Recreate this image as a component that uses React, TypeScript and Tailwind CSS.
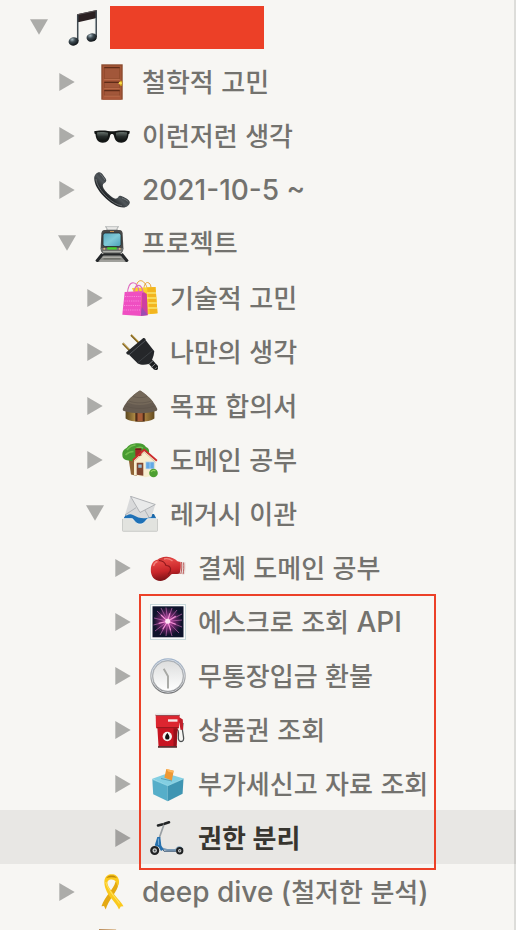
import { useId } from 'react'
import type { ReactNode } from 'react'
import clsx from 'clsx'

interface IIconProps {
  children: ReactNode
}

interface IPage {
  name?: string
  level: number
  icon: () => React.JSX.Element
  open?: boolean
  selected?: boolean
  redacted?: boolean
}

const indents = ['pl-[30px]', 'pl-[58px]', 'pl-[86px]', 'pl-[114px]']

function Icon({ children }: IIconProps): React.JSX.Element {
  return (
    <svg viewBox="0 0 36 36" className="size-9 shrink-0" aria-hidden="true">
      {children}
    </svg>
  )
}

function Music() {
  const id = useId()
  return (
    <Icon>
      <defs>
        <radialGradient id={id} cx=".4" cy=".25" r=".75">
          <stop offset="0" stopColor="#a9bac2" />
          <stop offset=".4" stopColor="#3e4b52" />
          <stop offset="1" stopColor="#0c0f12" />
        </radialGradient>
      </defs>
      <path d="M11 4.2 30.8 0v8L11 12.6z" fill="#2b2122" />
      <path d="M11 4.2 30.8 0v1L11 5.3z" fill="#5a5557" />
      <path d="M11.700 5v26M30.200 1v26" stroke="#3d474e" strokeWidth="1.500" />
      <path d="M12.400 12v17M29.400 8v17" stroke="#9aa6ad" strokeWidth=".4" />
      <ellipse cx="7.600" cy="31.400" rx="5" ry="4.200" transform="rotate(-12 7.600 31.400)" fill={`url(#${id})`} />
      <ellipse cx="25.700" cy="27.500" rx="5.200" ry="4.200" transform="rotate(-12 25.700 27.500)" fill={`url(#${id})`} />
    </Icon>
  )
}

function Door() {
  return (
    <Icon>
      <path d="M7.300.300h21.400v35.400H7.300z" fill="#8a4a2c" />
      <path d="M8.600 1.600h18.800v34.100H8.600z" fill="#a9583a" />
      <path d="M10.300 3.200h15.400v11.600H10.300zM10.300 18h15.400v5.800H10.300zM10.300 26.200h15.400v5.200H10.300z" fill="#a2573a" stroke="#864528" strokeWidth=".7" />
      <path d="M10.300 3.600h15.400M10.300 18.400h15.400M10.300 26.600h15.400" stroke="#5f2c18" strokeWidth="1.300" />
      <path d="M10.300 15.400h15.400M10.300 24.300h15.400M10.300 32h15.400" stroke="#c67d59" strokeWidth=".7" />
      <path d="M26 16.800h2.200v5H26z" fill="#c99a1a" />
      <ellipse cx="26.300" cy="19.200" rx="1.600" ry="1.400" fill="#f8d949" />
    </Icon>
  )
}

function Sunglasses() {
  const id = useId()
  return (
    <Icon>
      <defs>
        <linearGradient id={id} x2="0" y2="1">
          <stop offset="0" stopColor="#66716c" />
          <stop offset=".5" stopColor="#262c2a" />
          <stop offset="1" stopColor="#0e1110" />
        </linearGradient>
      </defs>
      <path d="M.2 13.200c3-.9 10-.9 13.800-.3 2.700.6 5.300.6 8 0 3.800-.6 10.800-.6 13.800.3l-.3 2.300-1 .8c-.4 4.800-2.200 8.400-7.300 8.400-4.700 0-6.500-3.200-7.200-6.700-.3-1.500-1-2-2-2s-1.700.5-2 2c-.7 3.500-2.500 6.700-7.200 6.700-5.100 0-6.900-3.600-7.300-8.400l-1-.8z" fill="#141716" />
      <path d="M3 14.600c2.700-.8 8.200-.7 11 .2.500 3.500-1.500 8.300-5.400 8.300-4.300 0-5.600-4-5.600-8.500zM33 14.600c-2.700-.8-8.200-.7-11 .2-.5 3.500 1.500 8.300 5.400 8.300 4.300 0 5.600-4 5.600-8.500z" fill={`url(#${id})`} />
    </Icon>
  )
}

function Receiver() {
  const id = useId()
  return (
    <Icon>
      <defs>
        <linearGradient id={id} x1=".35" y1=".65" x2=".62" y2=".38">
          <stop offset="0" stopColor="#23272a" />
          <stop offset=".5" stopColor="#50565a" />
          <stop offset="1" stopColor="#303538" />
        </linearGradient>
      </defs>
      <path d="M5.500.2c2 0 3.300 2.600 5 4.800 1.500 2 2.300 3.200 1.500 4.600-.8 1.500-3 1.800-3.200 3.600-.2 2.600 2.600 6 5.600 8.800 2.900 2.800 5.400 5 8 4.600 1.700-.3 1.700-2.300 3.300-2.800 1.500-.4 3.200.8 5.300 2 2.600 1.500 5 2.700 4.800 4.800-.3 2.700-3.300 5-6.300 5-6.200 0-13.700-5-19.600-11.100C4 18.600.2 11.700.2 6.200.2 2.900 2.600.2 5.500.2z" fill={`url(#${id})`} />
      <path d="M5.700 1.500c2 1 3.300 4 5.300 6.500M28 26c2 1 5 2 6.500 4" fill="none" stroke="#73797c" strokeWidth="1" />
      <path d="M2 7c.6 6 5.500 12.800 11.500 18.500C18 29.700 23 33 28 33.800" fill="none" stroke="#75797b" strokeWidth=".8" />
    </Icon>
  )
}

function Train() {
  const id = useId()
  return (
    <Icon>
      <defs>
        <linearGradient id={id} x2="1" y2="1">
          <stop offset="0" stopColor="#58a9c0" />
          <stop offset=".5" stopColor="#80cad7" />
          <stop offset="1" stopColor="#4b9fb8" />
        </linearGradient>
      </defs>
      <path d="M8 27.500 1.600 36h32.800L28 27.500z" fill="#8b8c88" />
      <path d="M8.500 28 2.500 35.500M27.500 28l6 7.500" stroke="#25282a" strokeWidth="3" />
      <path d="M8.500 31.300h19M5.500 35h25" stroke="#b4b3ae" strokeWidth="1" />
      <path d="M9.500 32.800h17" stroke="#64665f" strokeWidth="1" />
      <path d="M11 .8h14M12 .8l2 4M24 .8l-2 4M12 3.300h12" fill="none" stroke="#a1a4a4" strokeWidth=".8" />
      <path d="M10.500 4h15c2 0 2.900 1.400 3.100 3.200l.8 15.400c0 3-1.700 5-4.300 5H10.900c-2.600 0-4.300-2-4.300-5l.8-15.400C7.600 5.400 8.500 4 10.500 4z" fill="#494a49" />
      <path d="M6.800 22h22.400c0 3.300-1.500 5-4.100 5H10.900c-2.600 0-4.100-1.700-4.100-5z" fill="#6f706d" />
      <path d="M9 25.700h18" stroke="#b6b7b2" strokeWidth="1.200" />
      <rect x="9" y="7" width="18" height="13.500" rx="2.200" fill={`url(#${id})`} stroke="#262829" strokeWidth=".8" />
      <path d="M16 5.500h4" stroke="#d29a55" strokeWidth=".9" />
      <rect x="13.300" y="21.300" width="9.400" height="2.200" fill="#46d52c" />
      <circle cx="10.300" cy="22.800" r="1" fill="#dcb27c" />
      <circle cx="25.700" cy="22.800" r="1" fill="#dcb27c" />
      <path d="M9.500 27.300h17l1 2.200h-19z" fill="#252728" />
    </Icon>
  )
}

function Bags() {
  return (
    <Icon>
      <path d="M14 9c0-5 2-8.300 4.700-8.300S24 4 25 8M22 9c0-4 1.500-6.500 3.500-6.500S29 5 29 8" fill="none" stroke="#e7a33b" strokeWidth="1" />
      <path d="m10 8 23.500-1 2 26.300L20 35z" fill="#fbd02d" />
      <path d="M25 7.600 33.500 7l2 26.300-7.500.7z" fill="#f3b51f" />
      <path d="M25 13h9M25 18h9.500M26 23h9M26 28h9" stroke="#f9e56f" strokeWidth="1.500" />
      <path d="m2.700 12 17.500-1L18.800 36 .3 34.800z" fill="#ef4fc2" />
      <path d="m20.200 11 4.600 3 1 21.300-7 .7z" fill="#cf3fa2" />
      <path d="m19.800 27 5.700 8-6.700.8z" fill="#9c4db2" />
      <path d="M3 16.500h16M2.500 21h16M2 25.500h16.300M1.500 30H18" stroke="#f988da" strokeWidth="1" strokeDasharray="1.200 1" />
      <path d="M5.500 14C5.500 7 8 2.700 11 2.700S16.500 6 17 13M12 11c1-4 3-6 5-5.600 2 .4 3.500 3 4 7.600" fill="none" stroke="#df68be" strokeWidth="1.100" />
    </Icon>
  )
}

function Plug() {
  return (
    <Icon>
      <path d="m.7 9.300 9.500 9.700M9 1l10 10" stroke="#7f601d" strokeWidth="2" />
      <path d="m1 9 9 9.300M9.400.7 19 10" stroke="#d6b760" strokeWidth=".8" />
      <path d="m26 25 9.500 10.500" stroke="#1d1f21" strokeWidth="5.400" />
      <path d="m4.300 18.300 17-14.300c1.500-.3 2.600.8 2.400 2.300l8.600 11c-.5 5.500-2.500 10-5.700 12.800-4 1-8 .9-10.800-.6L7 20.800c-1.700.2-3-.9-2.700-2.500z" fill="#25272a" />
      <path d="M7 20.800 23.700 6.300" stroke="#51555a" strokeWidth="1" />
      <path d="m16 28.500 14.500-12" stroke="#3c4044" strokeWidth="1" />
      <path d="m26.800 30.500 4.400-4M29.500 33.300l4.300-4M32.500 35.700l2.500-2.500" stroke="#85898c" strokeWidth="1" />
    </Icon>
  )
}

function Hut() {
  const id = useId()
  return (
    <Icon>
      <defs>
        <linearGradient id={id}>
          <stop offset="0" stopColor="#5b471f" />
          <stop offset=".35" stopColor="#b58f48" />
          <stop offset=".7" stopColor="#a17c3d" />
          <stop offset="1" stopColor="#634b20" />
        </linearGradient>
      </defs>
      <path d="M3.600 21h28.800v9.500c-3 2.300-8.400 3.300-14.400 3.300s-11.400-1-14.400-3.300z" fill={`url(#${id})`} />
      <path d="M13.300 23h9.400v10.500h-9.400z" fill="#4e2c19" />
      <path d="M15.500 24h5.200v9h-5.200z" fill="#a85d38" />
      <path d="M18 2.500c4 2.300 13.500 9.500 17.200 18.300.3 1-.2 2-1.200 2.300-5 1.600-10.500 2.100-16 2.100S7 24.700 2 23.100c-1-.3-1.500-1.300-1.200-2.300C4.500 12 14 4.800 18 2.500z" fill="#665b50" />
      <path d="M18 2.500c3 1.700 9 6 13.200 11.500-7 4-20 4-26.400 0C9 8.500 15 4.200 18 2.500z" fill="#746859" />
      <path d="M11 8.500c4 1.500 10 1.500 14 0M7 13c6 2.500 16 2.500 22 0M3.500 18c8 3.300 21 3.300 29 0" fill="none" stroke="#5c5248" strokeWidth=".6" />
    </Icon>
  )
}

function House() {
  return (
    <Icon>
      <path d="M6.500 16H14l1 18-6-1.500z" fill="#8f6335" />
      <path d="M14 1.300c5-.7 8.500 1 10 3.700 2.700 1 3.500 3 3 6-1 3.500-6 4-10.500 4.500C13 19 9.500 19.500 7 18.500 3 18.800.2 16.500.4 13.300-.2 9.500 2 7 4.500 6 6.500 3 10 1.500 14 1.300z" fill="#479b31" />
      <path d="M5 8c2-2.500 5-4.700 8.500-5M3.500 13c2-2 5-3.500 8-3.500M13 7c2.500-1.700 5.500-2 8-1" fill="none" stroke="#72bd4f" strokeWidth="1.500" />
      <path d="M12 17 22 8.500l11.500 10V33l-10 2.300L12 33z" fill="#f8edcf" />
      <path d="M13.300 6.500h6v7.500h-6z" fill="#a32a27" />
      <path d="M13.300 6.500h6V8h-6z" fill="#741d1b" />
      <path d="m10.800 18.300 11.400-10.500 12.700 11" fill="none" stroke="#cc2c2d" strokeWidth="1.800" />
      <path d="m12.300 19.300 10-9 11.200 10" fill="none" stroke="#c6a981" strokeWidth=".6" />
      <path d="M14.700 20.800h6.600v12.900l-6.600-1z" fill="#81452e" />
      <path d="M16.300 22.500h3.400v3.300h-3.400z" fill="#91bcd8" />
      <path d="M23.700 19.800h8.600v7.200h-8.600z" fill="#62a8e5" stroke="#d9e3e6" strokeWidth=".8" />
      <path d="M28 20v7" stroke="#b8dcf5" strokeWidth=".6" />
      <circle cx="31.500" cy="31" r="4.300" fill="#4d9f31" />
      <path d="M29 30c1.300-1.500 3-2 4.500-1" fill="none" stroke="#91d35f" strokeWidth="1.100" />
    </Icon>
  )
}

function Inbox() {
  return (
    <Icon>
      <path d="M4 18h28l2.500 5v7h-33v-7z" fill="#1b68a8" />
      <path d="M8.500.3 33.300 8.500 28.500 24l-11 1.500L3 19z" fill="#d9dadb" />
      <path d="M8.500.3 33.300 8.500 18 16.500z" fill="#e9eaea" stroke="#a3a6a9" strokeWidth=".8" />
      <path d="m3 19 11-7.300M28.500 24l-5.700-10" stroke="#a3a8ad" strokeWidth=".8" />
      <path d="M2 22c3-3.500 6-4.500 9-3 4.500 2.500 9 4 14 3l8-1.500 1 4.500-16 5.500L2 25z" fill="#1e71b7" />
      <path d="M.3 22.500h9.500c2 0 3.200 5.500 8.200 5.500s6.200-5.500 8.200-5.500h9.500V34c0 .8-.5 1.300-1.300 1.300H1.600c-.8 0-1.300-.5-1.300-1.300z" fill="#e2e3df" />
      <path d="M.5 22.600h9.300c2 0 3.200 5.500 8.200 5.500s6.200-5.500 8.200-5.500h9.300" fill="none" stroke="#f7f7f5" strokeWidth=".7" />
      <path d="M.4 23v11.600c0 .4.300.7.900.7h33.400c.6 0 .9-.3.900-.7V23" fill="none" stroke="#c0c2bf" strokeWidth=".8" />
    </Icon>
  )
}

function Glove() {
  const id = useId()
  return (
    <Icon>
      <defs>
        <linearGradient id={id} x2=".2" y2="1">
          <stop offset="0" stopColor="#b92526" />
          <stop offset=".25" stopColor="#e54643" />
          <stop offset=".65" stopColor="#c9262a" />
          <stop offset="1" stopColor="#801217" />
        </linearGradient>
      </defs>
      <path d="M30 11.500c1.700.8 3.700.8 5.500.5.300 4 .2 8.300-.5 12.300-2 .1-4-.3-6-1z" fill="#e8dedb" />
      <path d="M31.500 12c.5 4 .3 8-.7 12M33.600 12.500c.4 4 .2 8-.5 11.700" fill="none" stroke="#b23b3a" strokeWidth=".8" />
      <path d="M16 6.800c5-.3 9 2 11.500 4.500l3 .8c.6 3.700.3 8-1 11.700-3.500.5-6.500-.5-8.500.7-2.500 3-6 6.400-10.500 6.400C4 30.900.7 26 .8 19.800.9 14 3.500 10.300 7.500 9.800 9.500 8 12.500 7 16 6.800z" fill={`url(#${id})`} />
      <path d="M9 10.500c3.700.3 6 2 7 5 2 0 4 1 4.500 3 .4 2-.5 4-2.500 6" fill="none" stroke="#8d171b" strokeWidth="1.100" />
      <path d="M3.500 16c.7-2.500 2-4 4-4.500M14 9c3-.7 6 0 8.500 2" fill="none" stroke="#f2837c" strokeWidth="1.300" />
    </Icon>
  )
}

function Fireworks() {
  const id = useId()
  return (
    <Icon>
      <defs>
        <radialGradient id={id}>
          <stop offset="0" stopColor="#d34aae" />
          <stop offset=".45" stopColor="#75286f" />
          <stop offset="1" stopColor="#11132c" />
        </radialGradient>
      </defs>
      <path d="M.4.400h35.200v35.200H.4z" fill="#fbfdfd" stroke="#b5cccf" strokeWidth=".8" />
      <path d="M2.500 2.300h31v31h-31z" fill="#0e142c" />
      <circle cx="17.700" cy="17.300" r="14" fill={`url(#${id})`} />
      <path d="M17.700 17.300 16 3.500M17.700 17.300 22 4M17.700 17.300 27 6M17.700 17.300 32 10M17.700 17.300 32 16M17.700 17.300 32 23M17.700 17.300 29 29M17.700 17.300 22 32M17.700 17.300 16 32M17.700 17.300 10 31M17.700 17.300 5 27M17.700 17.300 3.500 21M17.700 17.300 4 14M17.700 17.300 7 7M17.700 17.300 11 4" stroke="#c268b4" strokeWidth=".7" />
      <path d="m17.700 17.300 2-8M17.700 17.300l8-5M17.700 17.300l8 3M17.700 17.300l3 9M17.700 17.300l-5 8M17.700 17.300l-9 2M17.700 17.300 11 11" stroke="#f794d8" strokeWidth="1.100" />
      <circle cx="17.700" cy="17.300" r="2.500" fill="#ffe3f4" />
    </Icon>
  )
}

function Clock() {
  const id = useId()
  return (
    <Icon>
      <defs>
        <linearGradient id={id} x2="0" y2="1">
          <stop offset="0" stopColor="#9fb3cb" />
          <stop offset=".5" stopColor="#b0b2b5" />
          <stop offset="1" stopColor="#6e6f70" />
        </linearGradient>
        <linearGradient id={`${id}f`} x2="0" y2="1">
          <stop offset="0" stopColor="#dcdddd" />
          <stop offset="1" stopColor="#fff" />
        </linearGradient>
      </defs>
      <circle cx="18" cy="18" r="17.800" fill={`url(#${id})`} />
      <circle cx="18" cy="18" r="16.400" fill="none" stroke="#dfe3e8" strokeWidth=".8" />
      <circle cx="18" cy="18" r="15.200" fill={`url(#${id}f)`} stroke="#96999c" strokeWidth=".6" />
      <path d="m13.700 10.700 4.300 7.500v12.300" fill="none" stroke="#a7a8a5" strokeWidth="1.900" strokeLinejoin="round" />
    </Icon>
  )
}

function Fuel() {
  return (
    <Icon>
      <path d="M27 17.500c2 .5 1.500 4 1.300 7-.3 3.300.9 5 2.700 5 2.300 0 3-2 2.500-4.500L32.300 17l.7-6" fill="none" stroke="#4d5051" strokeWidth="1.300" />
      <path d="m25.700 7 3.600-1.800 3.500 2.300.4 10-2.600.5-1.300-7z" fill="#c11e29" />
      <path d="M7.300 15h20.200l-1 19.500H8.500z" fill="#c81522" />
      <path d="M23.500 15h4l-1 19.500h-3z" fill="#98111b" />
      <path d="M8 34h19v1.800H8z" fill="#5d3334" />
      <path d="M5.700 2.300h24l-.8 13.900H6z" fill="#dc2630" />
      <path d="M5.700 1.500h24v2.200h-24z" fill="#e5e5e5" />
      <path d="M5.700 3.500h24" stroke="#7b2027" strokeWidth=".7" />
      <path d="M7 15.700h21.500" stroke="#8a151b" strokeWidth="1" />
      <path d="M18 7.300h9.500v2.400H18z" fill="#f5e9ea" />
      <circle cx="17.300" cy="24.500" r="4.700" fill="#f6f1ef" />
      <path d="M17.300 20.800c1 1.700 2.200 3 2.200 4.600a2.200 2.200 0 0 1-4.400 0c0-1.600 1.200-2.900 2.200-4.600z" fill="#101011" />
    </Icon>
  )
}

function Ballot() {
  return (
    <Icon>
      <path d="M2.300 13 17.800 19v16.300L3.200 28.300z" fill="#56aec9" />
      <path d="M17.800 19 33.500 12.500l-.9 15.300-14.800 7.500z" fill="#3f95b2" />
      <path d="M2.300 12.700 17 7.500l16.500 5-15.700 6.900z" fill="#83cfe2" />
      <path d="m2.300 13.300 15.500 6.400 15.600-6.900" fill="none" stroke="#97dbe9" strokeWidth=".8" />
      <path d="m11 12.500 11 2.500" stroke="#5b9fb3" strokeWidth="1" />
      <path d="m16.300 3 7.400 1.800-1.800 9.800-7.500-2.800z" fill="#ee9834" />
      <path d="m16.300 3 7.400 1.800-.4 1.900-5-.9z" fill="#ffb75c" />
    </Icon>
  )
}

function Scooter() {
  return (
    <Icon>
      <path d="M8.500 20 14 4.500" stroke="#999fa3" strokeWidth="1.700" />
      <path d="m8 5.400 4-1M14.500 3.700l4.500-1.400" stroke="#222425" strokeWidth="2.600" strokeLinecap="round" />
      <path d="M11 28.300 17 30h14" fill="none" stroke="#7c9cb8" strokeWidth="2.200" />
      <path d="M11.500 27.500 14 31.300h12" fill="none" stroke="#45627d" strokeWidth="1" />
      <path d="M7.300 17h3l1 8.500 2.300 4-2.600 1.500-2.300-4-4-1.500z" fill="#2671ae" />
      <path d="m8.400 18.500.3 6.500" stroke="#81b7df" strokeWidth=".9" />
      <path d="M26 28.500c1.500-2.200 5.500-2.200 7 .5" fill="none" stroke="#5287b1" strokeWidth="1" />
      <circle cx="4.700" cy="30.500" r="3.400" fill="#cfd2d2" stroke="#202223" strokeWidth="2.300" />
      <circle cx="29.700" cy="30.700" r="2.700" fill="#cfd2d2" stroke="#202223" strokeWidth="2" />
      <circle cx="4.700" cy="30.500" r="1" fill="#4a4d4f" />
      <circle cx="29.700" cy="30.700" r=".8" fill="#4a4d4f" />
    </Icon>
  )
}

function Ribbon() {
  return (
    <Icon>
      <path d="M24.800 7c0 6-3.300 11-6.800 16-2.500 3.700-5 8-6.300 12.500l-1.700-3.500-2.500.3c1.500-5 4.500-9 7-12.500 3.500-4.500 6-8 7-12z" fill="#e4a912" />
      <path d="M10.500 6C11.500 2 14 .2 17.700.2S24 2 24.900 6c.3 2-.2 4-1.400 6.300-.8-3.600-2.300-6.800-5.800-6.800s-4.500 2-4.200 4c.7 4 4.500 8 8 12.500 3 3.700 6.300 6.700 8 10.300l-2.700.1-1.800 3.200c-2-4.500-5-8-8-11.500C13 19.500 9.500 12 10.500 6z" fill="#fbc91c" />
      <path d="M12.300 4c1.500-2 3.300-2.500 5.400-2.500S21.500 2 23 4c-3-1-7.700-1-10.700 0z" fill="#c08b0d" />
      <path d="M11.800 8c.8 5 4.700 9.500 8 14 2.300 2.800 4.200 5.200 5.700 7.500" fill="none" stroke="#ffe05d" strokeWidth="1.100" />
    </Icon>
  )
}

function Notebook() {
  const id = useId()
  return (
    <Icon>
      <defs>
        <linearGradient id={id}>
          <stop offset="0" stopColor="#b98a58" />
          <stop offset=".5" stopColor="#d8b78e" />
          <stop offset="1" stopColor="#f4f1ea" />
        </linearGradient>
      </defs>
      <path d="M5 1h17l9 34H5z" fill={`url(#${id})`} />
      <path d="M8 4h13l7 29H8z" fill="#efe9dd" />
    </Icon>
  )
}

const pages: IPage[] = [
  { name: '철학적 고민', level: 1, icon: Door },
  { name: '이런저런 생각', level: 1, icon: Sunglasses },
  { name: '2021-10-5 ~', level: 1, icon: Receiver },
  { name: '프로젝트', level: 1, icon: Train, open: true },
  { name: '기술적 고민', level: 2, icon: Bags },
  { name: '나만의 생각', level: 2, icon: Plug },
  { name: '목표 합의서', level: 2, icon: Hut },
  { name: '도메인 공부', level: 2, icon: House },
  { name: '레거시 이관', level: 2, icon: Inbox, open: true },
  { name: '결제 도메인 공부', level: 3, icon: Glove }
]

const markedPages: IPage[] = [
  { name: '에스크로 조회 API', level: 3, icon: Fireworks },
  { name: '무통장입금 환불', level: 3, icon: Clock },
  { name: '상품권 조회', level: 3, icon: Fuel },
  { name: '부가세신고 자료 조회', level: 3, icon: Ballot },
  { name: '권한 분리', level: 3, icon: Scooter, selected: true }
]

// Latin runs and spaces are set a step larger than the Hangul around them
function Title({ text }: { text: string }): React.JSX.Element {
  return (
    <>
      {text.split(/([A-Za-z0-9()~\s-]+)/).map((part, index) => (
        <span key={index} className={clsx(index % 2 === 1 && 'text-[28px]')}>
          {part}
        </span>
      ))}
    </>
  )
}

function PageRow({
  name,
  level,
  icon: PageIcon,
  open,
  selected,
  redacted
}: IPage): React.JSX.Element {
  return (
    <li
      className={clsx(
        'flex h-[54px] items-center border-r-2 border-black/10 pt-0.5',
        indents[level],
        selected && 'bg-[#e8e7e4]'
      )}
    >
      <button
        type="button"
        aria-label="Toggle"
        aria-expanded={!!open}
        className="mr-[18px] size-[18px] shrink-0"
      >
        <svg viewBox="0 0 18 18" className="size-[18px] fill-black/30">
          <path d={open ? 'M0 .3h18L9 15.700z' : 'M1.300 0v18L16.700 9z'} />
        </svg>
      </button>
      <PageIcon />
      {name && (
        <a
          href="#"
          className={clsx(
            'ml-3 whitespace-nowrap',
            selected ? 'font-bold text-[#37352f]' : 'font-medium'
          )}
        >
          <Title text={name} />
        </a>
      )}
      {redacted && (
        <span className="mb-0.5 ml-2 h-[43px] w-[154px] bg-[#ec4027]" />
      )}
    </li>
  )
}

export default function App(): React.JSX.Element {
  return (
    <nav className="h-screen overflow-hidden bg-[#f7f6f3] font-['Inter','Noto_Sans_CJK_KR',sans-serif] text-[26px] leading-9 text-[#73726e]">
      <ul>
        <PageRow level={0} icon={Music} open redacted />
        {pages.map((page) => (
          <PageRow key={page.name} {...page} />
        ))}
      </ul>
      <div className="relative">
        <ul>
          {markedPages.map((page) => (
            <PageRow key={page.name} {...page} />
          ))}
        </ul>
        <div className="pointer-events-none absolute top-0 -bottom-1.5 left-[139px] w-[297px] border-2 border-[#ec4027]" />
      </div>
      <ul>
        <PageRow name="deep dive (철저한 분석)" level={1} icon={Ribbon} />
        <PageRow level={1} icon={Notebook} />
      </ul>
    </nav>
  )
}
